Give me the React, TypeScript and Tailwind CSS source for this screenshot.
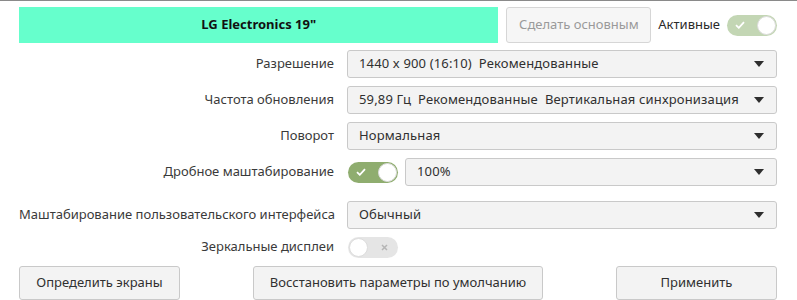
import React from "react";

const font = { fontFamily: '"Noto Sans", "Open Sans", sans-serif' };

function Arrow() {
  return (
    <svg width="10" height="6" viewBox="0 0 10 6" className="shrink-0">
      <path d="M0 0 H10 L5 6 Z" fill="#2e2e2e" />
    </svg>
  );
}

function Dropdown({ children, className = "" }: { children: React.ReactNode; className?: string }) {
  return (
    <div
      className={`h-[28px] flex items-center justify-between pl-[11px] pr-[12px] rounded-[3px] border border-[#c9c9c9] bg-[#f3f3f3] text-[13px] tracking-[0.15px] text-[#303030] ${className}`}
    >
      <span className="whitespace-pre">{children}</span>
      <Arrow />
    </div>
  );
}

function Toggle({ on, dim }: { on: boolean; dim?: boolean }) {
  if (on) {
    return (
      <div
        className={`w-[50px] h-[21px] rounded-full flex items-center justify-between pl-[8px] pr-[1px] ${dim ? "bg-[#c3d6b4]" : "bg-[#8fad6f]"}`}
      >
        <svg width="10" height="8" viewBox="0 0 10 8">
          <path d="M1 4.2 L3.8 6.8 L9 1.2" stroke="white" strokeWidth="1.8" fill="none" />
        </svg>
        <div className="w-[19px] h-[19px] rounded-full bg-white border border-[#dcdcdc]" />
      </div>
    );
  }
  return (
    <div className="w-[50px] h-[21px] rounded-full flex items-center justify-between pl-[1px] pr-[10px] bg-[#e5e5e5]">
      <div className="w-[19px] h-[19px] rounded-full bg-white border border-[#dcdcdc]" />
      <svg width="7" height="7" viewBox="0 0 7 7">
        <path d="M1 1 L6 6 M6 1 L1 6" stroke="#b5b5b5" strokeWidth="1.5" />
      </svg>
    </div>
  );
}

function Label({ children }: { children: React.ReactNode }) {
  return (
    <div className="w-[315px] text-right text-[13px] text-[#3a3a3a] shrink-0 whitespace-nowrap">{children}</div>
  );
}

function Button({ children, className = "" }: { children: React.ReactNode; className?: string }) {
  return (
    <div
      className={`h-[34px] flex items-center justify-center rounded-[3px] border border-[#c9c9c9] bg-[#f3f3f3] text-[13px] text-[#303030] whitespace-nowrap ${className}`}
    >
      {children}
    </div>
  );
}

export default function App() {
  return (
    <div className="w-[797px] h-[300px] bg-white overflow-hidden relative" style={font}>
      <div className="h-px bg-[#8a8a8a]" />
      <div className="pl-[19px] pr-[20px]">
        <div className="flex items-center mt-[6px] h-[36px]">
          <div className="w-[480px] h-[36px] bg-[#66ffcc] flex items-center justify-center text-[13px] font-bold text-[#111]">
            LG Electronics 19"
          </div>
          <div className="ml-[8px] w-[145px] h-[36px] flex items-center justify-center rounded-[3px] border border-[#d6d6d6] bg-[#f6f6f6] text-[13px] text-[#9a9a9a]">
            Сделать основным
          </div>
          <div className="ml-[7px] text-[13px] text-[#2a2a2a]">Активные</div>
          <div className="ml-[7px]">
            <Toggle on dim />
          </div>
        </div>

        <div className="flex items-center mt-[7px]">
          <Label>Разрешение</Label>
          <Dropdown className="ml-[13px] flex-1">{"1440 x 900 (16:10)  Рекомендованные"}</Dropdown>
        </div>
        <div className="flex items-center mt-[8px]">
          <Label>Частота обновления</Label>
          <Dropdown className="ml-[13px] flex-1">{"59,89 Гц  Рекомендованные  Вертикальная синхронизация"}</Dropdown>
        </div>
        <div className="flex items-center mt-[8px]">
          <Label>Поворот</Label>
          <Dropdown className="ml-[13px] flex-1">Нормальная</Dropdown>
        </div>
        <div className="flex items-center mt-[8px]">
          <Label>Дробное маштабирование</Label>
          <div className="ml-[14px]">
            <Toggle on />
          </div>
          <Dropdown className="ml-[7px] flex-1">100%</Dropdown>
        </div>
        <div className="flex items-center mt-[15px]">
          <Label>Маштабирование пользовательского интерфейса</Label>
          <Dropdown className="ml-[13px] flex-1">Обычный</Dropdown>
        </div>
        <div className="flex items-center mt-[4px] h-[28px]">
          <Label>Зеркальные дисплеи</Label>
          <div className="ml-[14px]">
            <Toggle on={false} />
          </div>
        </div>
        <div className="flex items-center justify-between mt-[5px]">
          <Button className="w-[161px]">Определить экраны</Button>
          <Button className="w-[290px]">Восстановить параметры по умолчанию</Button>
          <Button className="w-[161px]">Применить</Button>
        </div>
      </div>
    </div>
  );
}
